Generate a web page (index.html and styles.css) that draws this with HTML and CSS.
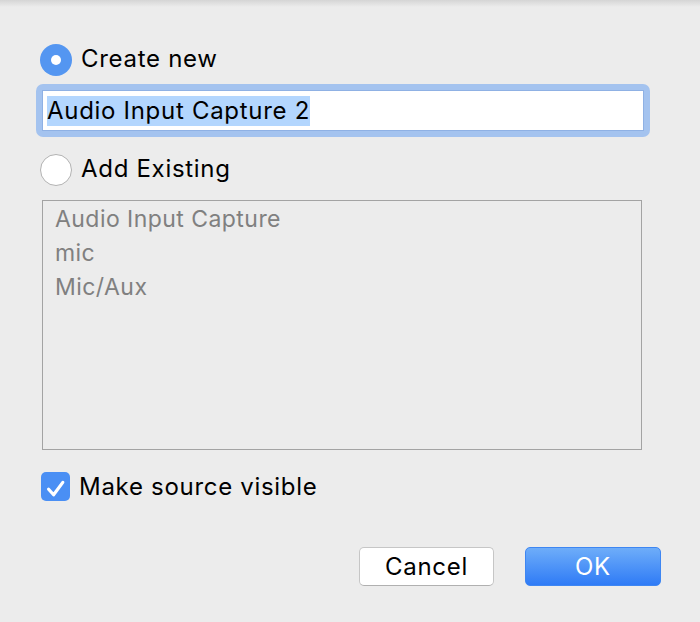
FILE: index.html
```html
<!DOCTYPE html>
<html>
<head>
<meta charset="utf-8">
<link rel="stylesheet" href="styles.css">
</head>
<body>
<div class="dialog">
  <div class="option-row">
    <span class="radio radio-on"><span class="radio-dot"></span></span>
    <span class="option-label">Create new</span>
  </div>
  <div class="focus-ring">
    <div class="text-field"><span class="selection">Audio Input Capture 2</span></div>
  </div>
  <div class="option-row option-row-second">
    <span class="radio radio-off"></span>
    <span class="option-label">Add Existing</span>
  </div>
  <div class="source-list">
    <div class="source-item">Audio Input Capture</div>
    <div class="source-item">mic</div>
    <div class="source-item">Mic/Aux</div>
  </div>
  <div class="check-row">
    <span class="checkbox">
      <svg viewBox="0 0 29 29" width="29" height="29"><path d="M7.6 17.2 L12.6 22.8 L21.8 10.4" fill="none" stroke="#fff" stroke-width="3.2" stroke-linecap="round" stroke-linejoin="round"/></svg>
    </span>
    <span class="check-label">Make source visible</span>
  </div>
  <div class="button-row">
    <button class="btn btn-cancel">Cancel</button>
    <button class="btn btn-ok">OK</button>
  </div>
</div>
</body>
</html>
```
FILE: styles.css
```css
html, body {
  margin: 0;
  padding: 0;
}
body {
  width: 700px;
  height: 622px;
  overflow: hidden;
  background: linear-gradient(#d5d5d5, #ececec 7px) no-repeat top left / 100% 7px, #ececec;
  font-family: Inter, "Liberation Sans", sans-serif;
  font-size: 24px;
  letter-spacing: 0.7px;
  color: #000;
}
.dialog {
  padding: 44px 0 0 40px;
  width: 621px;
}
.option-row {
  display: flex;
  align-items: center;
  height: 32px;
}
.option-row-second {
  margin-top: 17px;
}
.radio {
  width: 32px;
  height: 32px;
  border-radius: 50%;
  box-sizing: border-box;
  flex: none;
  display: flex;
  align-items: center;
  justify-content: center;
}
.radio-on {
  background: #5496f1;
}
.radio-dot {
  width: 10px;
  height: 10px;
  border-radius: 50%;
  background: #fff;
}
.radio-off {
  background: #fff;
  border: 1.5px solid #b2b2b2;
}
.option-label {
  margin-left: 9px;
  line-height: 32px;
  margin-top: -2px;
}
.focus-ring {
  margin: 8px 0 0 -4px;
  width: 614px;
  height: 53px;
  box-sizing: border-box;
  padding: 6px;
  background: #a4c3ef;
  border-radius: 7px;
}
.text-field {
  height: 41px;
  box-sizing: border-box;
  background: #fff;
  border: 1px solid #8fb1e4;
  padding: 5px 0 0 4px;
}
.selection {
  display: inline-block;
  height: 30px;
  line-height: 30px;
  background: #b3d6fe;
  vertical-align: top;
}
.source-list {
  margin: 14px 0 0 2px;
  width: 600px;
  height: 250px;
  box-sizing: border-box;
  border: 1px solid #a3a3a3;
  padding: 1px 0 0 12px;
}
.source-item {
  font-size: 23px;
  letter-spacing: 0.45px;
  line-height: 34px;
  color: #808080;
}
.check-row {
  display: flex;
  align-items: center;
  margin: 22px 0 0 1px;
  height: 29px;
}
.checkbox {
  width: 29px;
  height: 29px;
  border-radius: 5px;
  background: #4a8ff4;
  flex: none;
  display: block;
}
.checkbox svg {
  display: block;
}
.check-label {
  margin-left: 9px;
  line-height: 29px;
}
.button-row {
  display: flex;
  justify-content: flex-end;
  gap: 31px;
  margin-top: 46px;
}
.btn {
  height: 39px;
  box-sizing: border-box;
  border-radius: 5px;
  font-family: Inter, "Liberation Sans", sans-serif;
  font-size: 24px;
  letter-spacing: 0.7px;
  padding: 0;
  line-height: 37px;
}
.btn-cancel {
  width: 135px;
  background: #fff;
  border: 1px solid #c6c6c6;
  border-bottom-color: #b0b0b0;
  color: #000;
}
.btn-ok {
  width: 136px;
  background: linear-gradient(#6eadf9, #2f7bf6);
  border: 1px solid #3e86f2;
  color: #fff;
}
```
